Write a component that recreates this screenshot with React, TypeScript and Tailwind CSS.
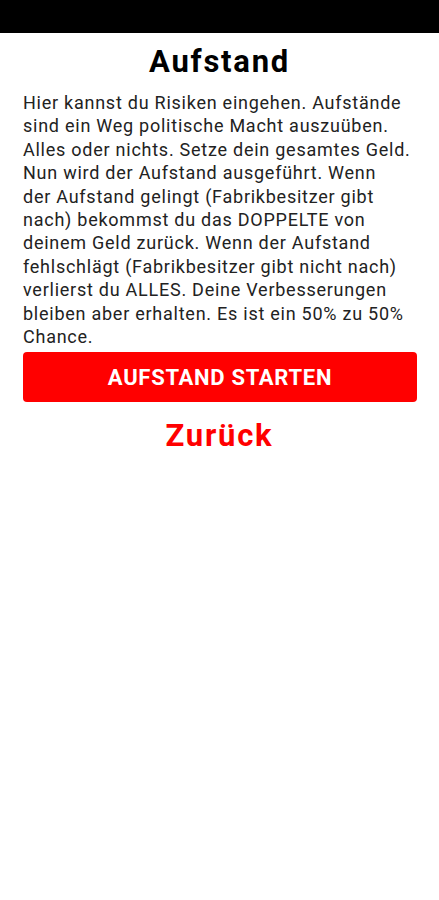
import React from 'react';

const lines = [
  'Hier kannst du Risiken eingehen. Aufstände',
  'sind ein Weg politische Macht auszuüben.',
  'Alles oder nichts. Setze dein gesamtes Geld.',
  'Nun wird der Aufstand ausgeführt. Wenn',
  'der Aufstand gelingt (Fabrikbesitzer gibt',
  'nach) bekommst du das DOPPELTE von',
  'deinem Geld zurück. Wenn der Aufstand',
  'fehlschlägt (Fabrikbesitzer gibt nicht nach)',
  'verlierst du ALLES. Deine Verbesserungen',
  'bleiben aber erhalten. Es ist ein 50% zu 50%',
  'Chance.',
];

export default function App() {
  return (
    <div className="min-h-[900px] w-[439px] bg-white font-['Roboto',sans-serif]">
      <div className="h-[33px] bg-black" />
      <div className="flex flex-col px-[23px] pt-[7px]">
        <h1 className="text-center text-[31px] font-bold leading-[44px] tracking-[1.75px] text-black">Aufstand</h1>
        <p className="mt-[7px] whitespace-nowrap text-[18px] leading-[23.4px] tracking-[0.75px] text-[#222]">
          {lines.map((l, i) => (
            <React.Fragment key={i}>
              {l}
              {i < lines.length - 1 && <br />}
            </React.Fragment>
          ))}
        </p>
        <button className="mt-[4px] h-[50px] w-[394px] rounded-[4px] bg-[#ff0000] text-[22px] font-bold tracking-[0.7px] text-white">
          AUFSTAND STARTEN
        </button>
        <button className="mt-[12px] text-center text-[31px] font-bold leading-[44px] tracking-[1.75px] text-[#ff0000]">
          Zurück
        </button>
      </div>
    </div>
  );
}
